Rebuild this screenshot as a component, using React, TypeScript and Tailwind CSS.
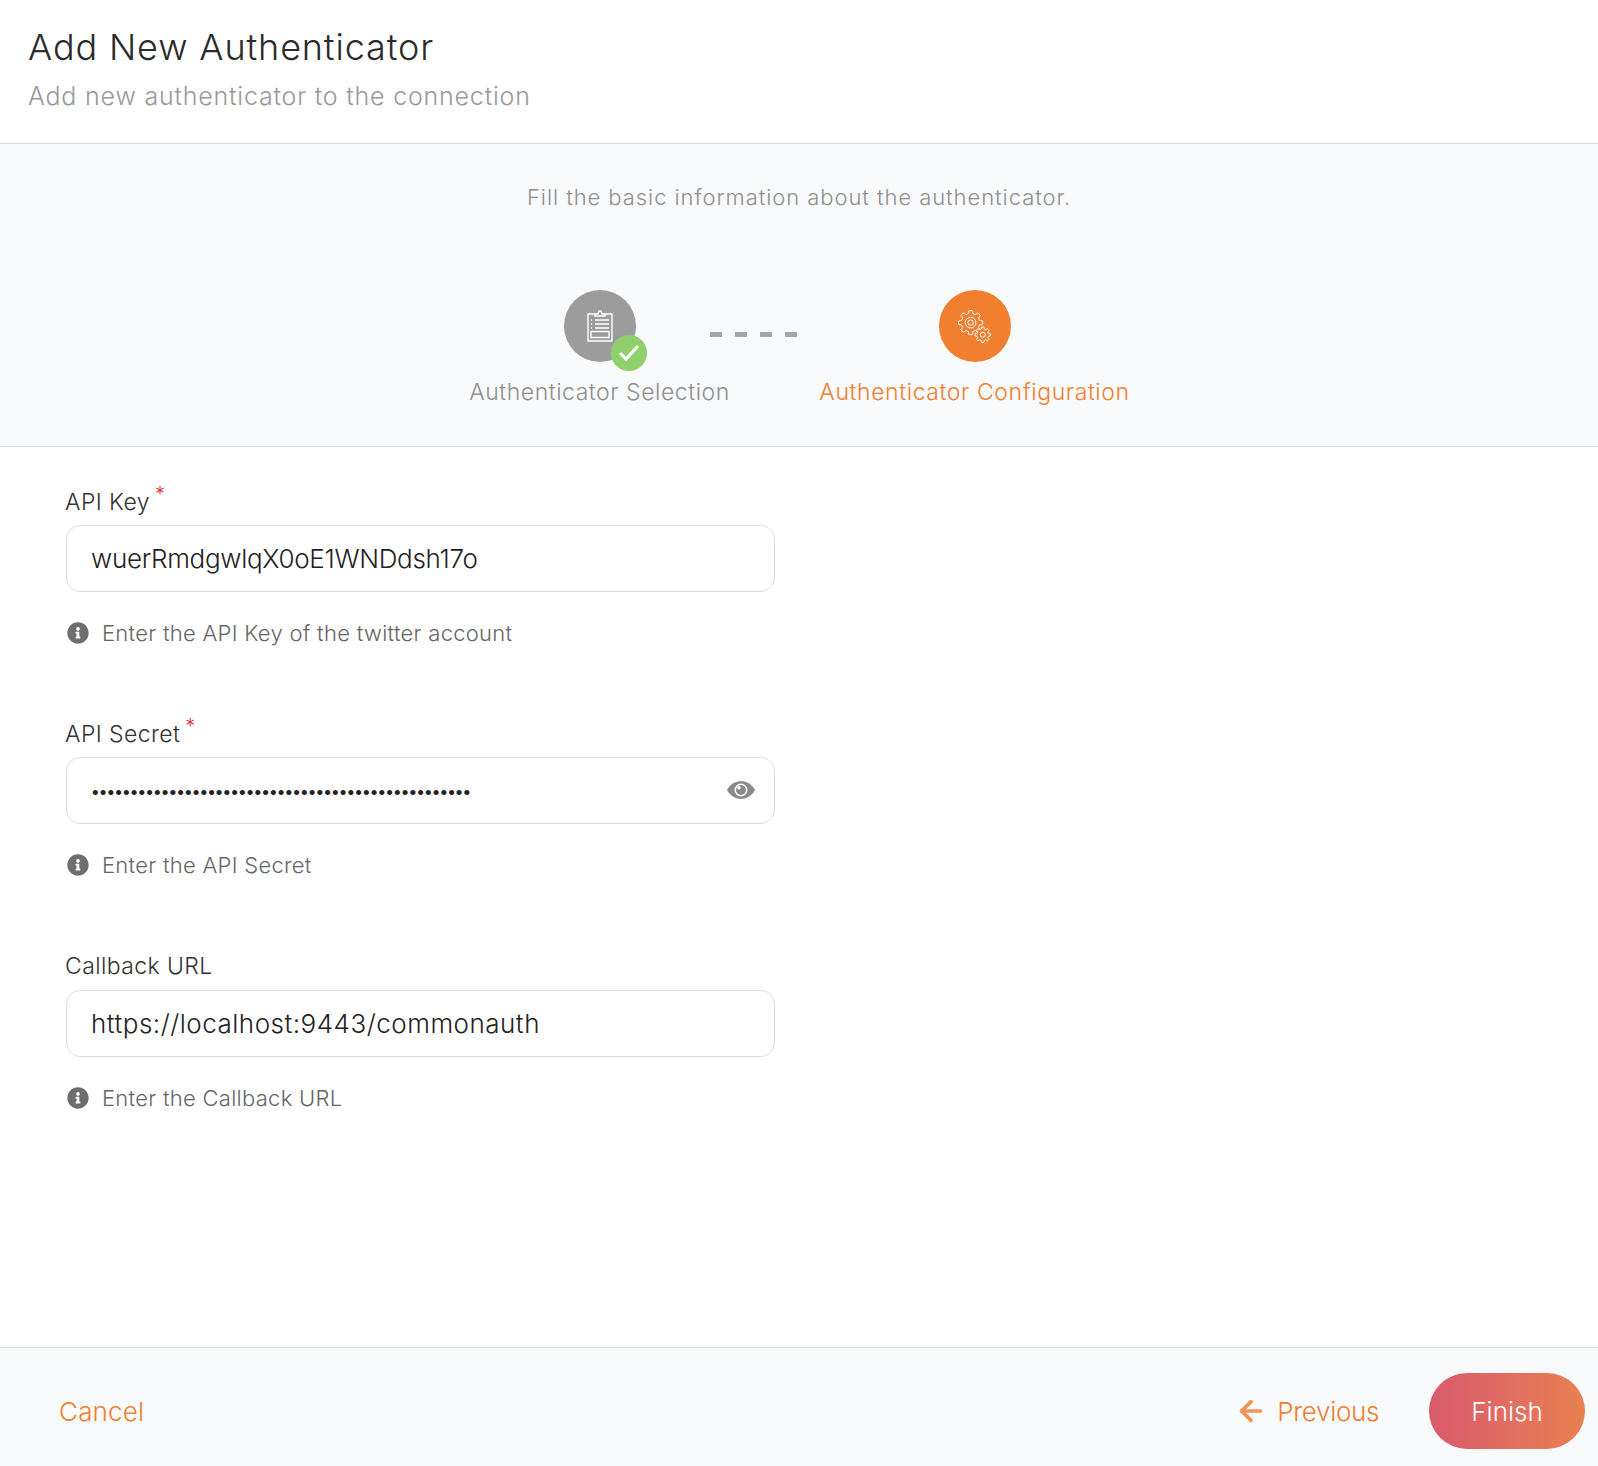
import React from 'react';
import { ArrowLeft } from 'lucide-react';
import { FaInfoCircle } from 'react-icons/fa';

const ClipboardIcon = () => (
    <svg width="26" height="32" viewBox="0 0 26 32" fill="none" stroke="#fff" strokeWidth="1.4">
        <path d="M8 4H1v27h24V4h-7" />
        <path d="M8 6V4h3l1-3h2l1 3h3v2z" />
        <path d="M4 10h1M4 14h1M4 18h1M8 10h14M8 14h14M8 18h14" />
        <rect x="4" y="21.5" width="18" height="6" />
    </svg>
);

const gearPath = (cx: number, cy: number, outer: number, inner: number, teeth: number) => {
    const pts: string[] = [];
    const step = (Math.PI * 2) / teeth;
    for (let i = 0; i < teeth; i++) {
        const a = i * step;
        const corners: [number, number][] = [
            [inner, a - step * 0.32],
            [outer, a - step * 0.18],
            [outer, a + step * 0.18],
            [inner, a + step * 0.32],
        ];
        corners.forEach(([r, t]) => pts.push(`${(cx + r * Math.cos(t)).toFixed(2)},${(cy + r * Math.sin(t)).toFixed(2)}`));
    }
    return `M${pts.join('L')}Z`;
};

const GearsIcon = () => (
    <svg width="33" height="33" viewBox="0 0 34 34" fill="none" stroke="#fff" strokeWidth="1">
        <path d={gearPath(13, 13, 12.5, 9.5, 8)} />
        <circle cx="13" cy="13" r="5.5" />
        <circle cx="13" cy="13" r="2.8" />
        <path d={gearPath(25.5, 25.5, 8, 6, 8)} fill="#f07f30" />
        <circle cx="25.5" cy="25.5" r="2.6" />
    </svg>
);

const EyeIcon = () => (
    <svg width="28" height="18" viewBox="0 0 28 18">
        <path d="M14 0C8 0 3 3.600 0 9c3 5.400 8 9 14 9s11-3.600 14-9C25 3.600 20 0 14 0z" fill="#8a8a8a" />
        <circle cx="14" cy="9" r="6.500" fill="#fff" />
        <circle cx="14" cy="9" r="5" fill="#8a8a8a" />
        <circle cx="12" cy="6.800" r="1.800" fill="#fff" />
    </svg>
);

interface FieldProps {
    label: string;
    value: string;
    hint: string;
    required?: boolean;
    secret?: boolean;
    valueClass?: string;
}

const Field = ({ label, value, hint, required, secret, valueClass }: FieldProps) => (
    <div className="h-[232.25px]">
        <div className="h-[46px] -ml-[1px] flex items-center text-[23px] leading-none tracking-[0.4px] text-[#333]">
            {label}
            {required && <span className="ml-[5px] mb-[16px] text-[20px] text-[#d9363e]">*</span>}
        </div>
        <div className="relative w-[709px] h-[67px]">
            <input
                readOnly
                type={secret ? 'password' : 'text'}
                value={value}
                className={`w-full h-full pr-[60px] rounded-[14px] border border-[#dedede] bg-white text-[#222] outline-none ${valueClass}`}
            />
            {secret && (
                <span className="absolute right-[20px] top-[24px]">
                    <EyeIcon />
                </span>
            )}
        </div>
        <div className="mt-[30px] ml-[1px] flex items-center gap-[13px] text-[22px] leading-none tracking-[0.28px] text-[#666]">
            <FaInfoCircle className="text-[#6e6e6e]" size={22} />
            {hint}
        </div>
    </div>
);

export default function App() {
    return (
        <div className="w-[1598px] h-[1466px] flex flex-col bg-white font-['Inter',sans-serif] font-light">
            <header className="h-[144px] shrink-0 px-[28px] pt-[26px] border-b border-[#dcdee0]">
                <h1 className="text-[36px] leading-[42px] font-light tracking-[0.85px] text-[#2b2b2b]">Add New Authenticator</h1>
                <p className="mt-[13px] text-[25px] leading-[30px] tracking-[0.8px] text-[#999]">Add new authenticator to the connection</p>
            </header>

            <section className="h-[303px] shrink-0 flex flex-col items-center bg-[#f9fafb] border-b border-[#dcdee0]">
                <p className="mt-[39px] text-[22px] leading-[28px] tracking-[0.94px] text-[#8f8f8f]">Fill the basic information about the authenticator.</p>
                <div className="relative mt-[79px] flex gap-[91px]">
                    <div className="flex flex-col items-center w-[260px]">
                        <div className="relative w-[72px] h-[72px] rounded-full bg-[#9c9c9c] flex items-center justify-center">
                            <ClipboardIcon />
                            <div className="absolute left-[47px] top-[45px] w-[36px] h-[36px] rounded-full bg-[#8fd06c] flex items-center justify-center">
                                <svg width="22" height="18" viewBox="0 0 22 18" fill="none" stroke="#fff" strokeWidth="3">
                                    <path d="M2 9l6 6L20 2" />
                                </svg>
                            </div>
                        </div>
                        <span className="mt-[15px] text-[23px] leading-[30px] tracking-[0.55px] text-[#8f8f8f] whitespace-nowrap">Authenticator Selection</span>
                    </div>
                    <div className="absolute left-[240px] top-[42px] flex gap-[13px]">
                        {[0, 1, 2, 3].map(i => <span key={i} className="w-[12px] h-[5px] bg-[#a6a6a6]" />)}
                    </div>
                    <div className="flex flex-col items-center w-[308px]">
                        <div className="w-[72px] h-[72px] rounded-full bg-[#f07f30] flex items-center justify-center">
                            <GearsIcon />
                        </div>
                        <span className="mt-[15px] text-[23px] leading-[30px] tracking-[0.6px] text-[#f07f30] whitespace-nowrap">Authenticator Configuration</span>
                    </div>
                </div>
            </section>

            <main className="flex-1 pl-[66px] pt-[32px]">
                <Field label="API Key" value="wuerRmdgwlqX0oE1WNDdsh17o" hint="Enter the API Key of the twitter account" required valueClass="pl-[24px] text-[26px] tracking-[-0.3px]" />
                <Field label="API Secret" value="wuerRmdgwlqX0oE1WNDdsh17owuerRmdgwlqX0oE1WNDdsh17" hint="Enter the API Secret" required secret valueClass="pl-[25px] pt-[5px] font-['Liberation_Sans',sans-serif] text-[19px] tracking-[1.09px]" />
                <Field label="Callback URL" value="https://localhost:9443/commonauth" hint="Enter the Callback URL" valueClass="pl-[24px] text-[26px] tracking-[0.5px]" />
            </main>

            <footer className="h-[119px] shrink-0 flex items-center bg-[#f9fafb] border-t border-[#dcdee0] pl-[59px] pr-[13px] pt-[8px]">
                <button className="text-[26px] tracking-[0.2px] text-[#f07f30] font-light">Cancel</button>
                <button className="ml-auto flex items-center gap-[10px] text-[26px] tracking-[-0.35px] text-[#f07f30] font-light">
                    <ArrowLeft size={32} strokeWidth={2.8} className="text-[#f19458]" />
                    Previous
                </button>
                <button className="ml-[50px] w-[156px] h-[76px] rounded-full bg-gradient-to-r from-[#d9596d] to-[#e8804f] text-[26px] text-white font-light">
                    Finish
                </button>
            </footer>
        </div>
    );
}
